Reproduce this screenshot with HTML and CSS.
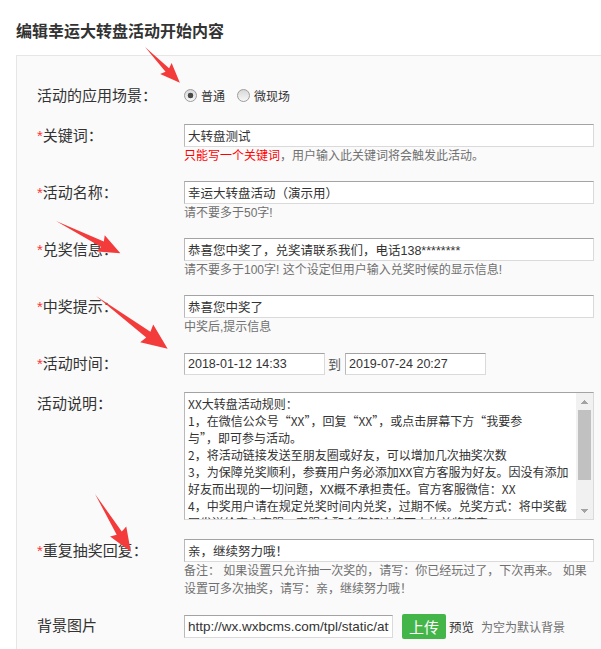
FILE: index.html
```html
<!DOCTYPE html>
<html lang="zh-CN">
<head>
  <meta charset="UTF-8" />
  <meta name="viewport" content="width=device-width, initial-scale=1.0"/>
  <title>编辑幸运大转盘活动</title>
  <link rel="stylesheet" href="styles.css">
</head>
<body>
  <h2 class="page-title">编辑幸运大转盘活动开始内容</h2>

  <div class="edit-panel">
    <!-- 应用场景 -->
    <div class="form-row row-scene">
      <label class="form-label">活动的应用场景：</label>
      <div class="form-field radio-group">
        <label class="radio-item"><input type="radio" name="scene" checked>普通</label>
        <label class="radio-item"><input type="radio" name="scene">微现场</label>
      </div>
    </div>

    <div class="form-row">
      <label class="form-label"><span class="req">*</span>关键词：</label>
      <div class="form-field">
        <input type="text" class="text-input" value="大转盘测试">
        <p class="hint"><span class="hint-red">只能写一个关键词</span>，用户输入此关键词将会触发此活动。</p>
      </div>
    </div>

    <div class="form-row">
      <label class="form-label"><span class="req">*</span>活动名称：</label>
      <div class="form-field">
        <input type="text" class="text-input" value="幸运大转盘活动（演示用）">
        <p class="hint">请不要多于50字!</p>
      </div>
    </div>

    <div class="form-row">
      <label class="form-label"><span class="req">*</span>兑奖信息：</label>
      <div class="form-field">
        <input type="text" class="text-input" value="恭喜您中奖了，兑奖请联系我们，电话138********">
        <p class="hint">请不要多于100字! 这个设定但用户输入兑奖时候的显示信息!</p>
      </div>
    </div>

    <div class="form-row">
      <label class="form-label"><span class="req">*</span>中奖提示：</label>
      <div class="form-field">
        <input type="text" class="text-input" value="恭喜您中奖了">
        <p class="hint">中奖后,提示信息</p>
      </div>
    </div>

    <!-- 活动时间 -->
    <div class="form-row row-time">
      <label class="form-label"><span class="req">*</span>活动时间：</label>
      <div class="form-field time-range">
        <input type="text" class="text-input date-input" value="2018-01-12 14:33">
        <span class="time-sep">到</span>
        <input type="text" class="text-input date-input" value="2019-07-24 20:27">
      </div>
    </div>

    <div class="form-row row-rules">
      <label class="form-label">活动说明：</label>
      <div class="form-field">
        <div class="rule-box">
          <textarea class="rule-text" wrap="off">XX大转盘活动规则：
1，在微信公众号“XX”，回复“XX”，或点击屏幕下方“我要参
与”，即可参与活动。
2，将活动链接发送至朋友圈或好友，可以增加几次抽奖次数
3，为保障兑奖顺利，参赛用户务必添加XX官方客服为好友。因没有添加
好友而出现的一切问题，XX概不承担责任。官方客服微信：XX
4，中奖用户请在规定兑奖时间内兑奖，过期不候。兑奖方式：将中奖截
图发送给官方客服，客服会配合您解决接下来的兑奖事宜。
5，本活动最终解释权归XX所有。</textarea>
          <div class="scrollbar">
            <span class="sb-btn sb-up"></span>
            <span class="sb-track"><span class="sb-thumb"></span></span>
            <span class="sb-btn sb-down"></span>
          </div>
        </div>
      </div>
    </div>

    <div class="form-row">
      <label class="form-label"><span class="req">*</span>重复抽奖回复：</label>
      <div class="form-field">
        <input type="text" class="text-input" value="亲，继续努力哦！">
        <p class="hint">备注： 如果设置只允许抽一次奖的，请写：你已经玩过了，下次再来。 如果设置可多次抽奖，请写：亲，继续努力哦！</p>
      </div>
    </div>

    <!-- 背景图片 -->
    <div class="form-row">
      <label class="form-label">背景图片</label>
      <div class="form-field upload-line">
        <input type="text" class="text-input url-input" value="http://wx.wxbcms.com/tpl/static/attachment/zhuanpan/bg.jpg">
        <button type="button" class="upload-btn">上传</button>
        <a class="preview-link">预览</a>
        <span class="upload-note">为空为默认背景</span>
      </div>
    </div>
  </div>

  <!-- 标注箭头 -->
  <svg class="marks" width="601" height="649" viewBox="0 0 601 649">
    <g fill="#f43b3b">
      <polygon transform="translate(145 47) rotate(45.8)" points="0,0 32,-2.5 30,-8 50,0 30,8 32,2.5"/>
      <polygon transform="translate(56 221) rotate(26.6)" points="0,0 52,-3 50,-9 72,0 50,9 52,3"/>
      <polygon transform="translate(96 296) rotate(36.4)" points="0,0 65,-3.5 63,-11 89,0 63,11 65,3.5"/>
      <polygon transform="translate(95 494) rotate(58.2)" points="0,0 46,-3 44,-9.5 68,0 44,9.5 46,3"/>
    </g>
  </svg>
</body>
</html>
```

FILE: styles.css
```css
/* General */
html,
body {
  overflow: hidden;
}

body {
  font-family: 'Liberation Sans', 'Noto Sans CJK SC', sans-serif;
  background-color: #fff;
  margin: 0;
  padding: 0 0 0 16px;
  color: #333;
  position: relative;
}

.page-title {
  margin: 20px 0 11px;
  font-size: 16px;
  line-height: 24px;
  font-weight: 700;
  color: #333;
}

/* Panel */
.edit-panel {
  background-color: #fafafa;
  border: 1px solid #e6e6e6;
  border-right: none;
  padding: 28px 0 20px 20px;
}

.form-row {
  display: flex;
  align-items: flex-start;
  margin-bottom: 16px;
}

.row-scene,
.row-time {
  margin-bottom: 17px;
}

.row-rules {
  margin-bottom: 19px;
}

.form-label {
  width: 147px;
  flex-shrink: 0;
  font-size: 15px;
  line-height: 23px;
  color: #333;
}

.req {
  color: #f33;
}

.form-field {
  width: 410px;
}

/* Inputs */
.text-input {
  display: block;
  width: 410px;
  height: 23px;
  box-sizing: border-box;
  margin: 0;
  padding: 0 3px;
  border: 1px solid #dadada;
  border-top-color: #a3a3a3;
  border-left-color: #b9b9b9;
  background-color: #fff;
  font-family: 'Liberation Sans', 'Noto Sans CJK SC', sans-serif;
  font-size: 12.5px;
  color: #333;
  outline: none;
}

.hint {
  margin: 0;
  font-size: 12px;
  line-height: 18px;
  color: #707070;
}

.hint-red {
  color: #f00;
}

/* Radio */
.radio-group {
  display: flex;
  align-items: center;
  height: 23px;
}

.radio-item {
  display: inline-flex;
  align-items: center;
  margin-right: 12px;
  font-size: 12px;
  color: #333;
}

.radio-item input {
  -webkit-appearance: none;
  appearance: none;
  width: 13px;
  height: 13px;
  margin: 0 4px 0 0;
  border: 1px solid #9c9c9c;
  border-radius: 50%;
  background: linear-gradient(#d8d8d8, #f7f7f7);
  box-sizing: border-box;
}

.radio-item input:checked {
  background: radial-gradient(circle, #4a4a4a 0 2.6px, transparent 3.1px),
    linear-gradient(#d8d8d8, #f7f7f7);
}

/* Time range */
.time-range {
  display: flex;
  align-items: center;
  height: 23px;
}

.date-input {
  width: 141px;
  height: 22px;
}

.time-sep {
  margin: 0 4px 0 3px;
  font-size: 13px;
  color: #555;
}

/* Rules textarea */
.rule-box {
  display: flex;
  width: 410px;
  height: 128px;
  box-sizing: border-box;
  border: 1px solid #dadada;
  border-top-color: #a3a3a3;
  border-left-color: #b9b9b9;
  background-color: #fff;
}

.rule-text {
  flex: 1;
  min-width: 0;
  height: 100%;
  box-sizing: border-box;
  margin: 0;
  padding: 2px 0 0 3px;
  border: none;
  background-color: #fff;
  font-family: 'Noto Sans CJK SC', 'Liberation Sans', sans-serif;
  font-size: 12px;
  line-height: 17px;
  color: #333;
  white-space: pre;
  overflow: hidden;
  resize: none;
  outline: none;
}

.scrollbar {
  width: 17px;
  flex-shrink: 0;
  display: flex;
  flex-direction: column;
  background-color: #f1f1f1;
}

.sb-btn {
  height: 17px;
  flex-shrink: 0;
}

.sb-up {
  background: conic-gradient(from 135deg at 50% 0, #a3a3a3 90deg, transparent 0) center / 7px 4px no-repeat;
}

.sb-down {
  background: conic-gradient(from -45deg at 50% 100%, #a3a3a3 90deg, transparent 0) center / 7px 4px no-repeat;
}

.sb-track {
  flex: 1;
  padding: 0 2px;
}

.sb-thumb {
  display: block;
  height: 70px;
  background-color: #c1c1c1;
}

/* Upload line */
.upload-line {
  display: flex;
  align-items: center;
  height: 25px;
}

.url-input {
  width: 209px;
  font-size: 13.5px;
}

.upload-btn {
  width: 44px;
  height: 25px;
  margin-left: 9px;
  padding: 0;
  border: none;
  border-radius: 2px;
  background-color: #44b549;
  color: #fff;
  font-family: 'Liberation Sans', 'Noto Sans CJK SC', sans-serif;
  font-size: 15px;
  cursor: pointer;
}

.preview-link {
  margin-left: 3px;
  font-size: 12.5px;
  color: #333;
}

.upload-note {
  margin-left: 7px;
  font-size: 12px;
  color: #707070;
}

/* Annotation arrows */
.marks {
  position: absolute;
  left: 0;
  top: 0;
  pointer-events: none;
}
```
